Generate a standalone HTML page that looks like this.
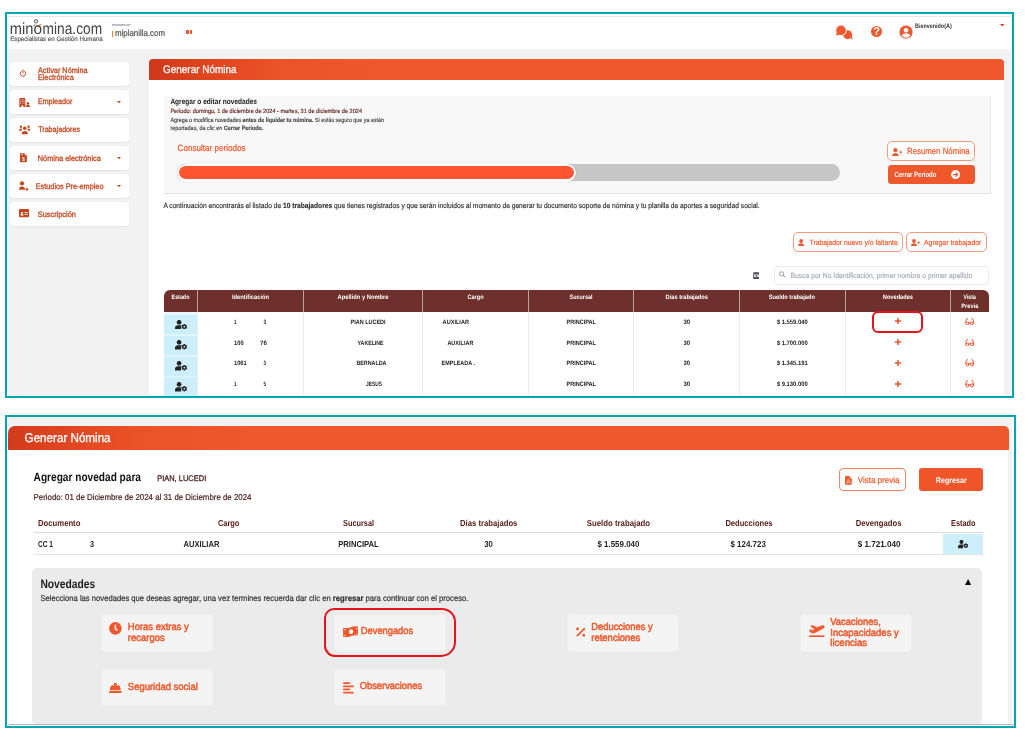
<!DOCTYPE html>
<html><head><meta charset="utf-8"><title>Generar Nomina</title>
<style>
html,body{margin:0;padding:0;background:#fff;}
body{width:1025px;height:736px;position:relative;overflow:hidden;font-family:"Liberation Sans",sans-serif;}
div,span.t,svg{position:absolute;box-sizing:border-box;}
#tx text{font-family:"Liberation Sans",sans-serif;white-space:pre;text-rendering:geometricPrecision;}
#w{left:0;top:0;width:1025px;height:736px;will-change:transform;}
</style></head><body><div id="w">
<div style="left:5px;top:12px;width:1009px;height:386px;background:#fff;border:2px solid #00a5b4;"></div>
<div style="left:8px;top:16px;width:1003px;height:1px;background:#e6e6f0;"></div>
<div style="left:8px;top:49px;width:1003px;height:346px;background:#f2f2f2;"></div>
<svg style="left:30px;top:14px;" width="16" height="16" viewBox="0 0 16 16"><circle cx="6.100" cy="7.300" r="1.700" fill="#fff" stroke="#444" stroke-width="0.900"/><path d="M3.200 12.600 L5.300 10.200" stroke="#444" stroke-width="0.800" fill="none"/><path d="M7.100 11.500 L8.300 12.900 L11 9.900" stroke="#f58220" stroke-width="1.100" fill="none"/></svg>
<div style="left:112px;top:30.6px;width:0.6px;height:6.6px;background:#f58220;"></div>
<div style="left:186.3px;top:29.6px;width:2.3px;height:4.8px;background:#f0582c;"></div>
<div style="left:189.6px;top:29.6px;width:2.4px;height:4.8px;background:#f0582c;"></div>
<svg style="left:835px;top:24.5px;" width="18.4" height="15.4" viewBox="0 0 18.4 15.4"><g fill="#ef582c"><circle cx="12.600" cy="9.700" r="4.500"/><path d="M14.800 12.600L17.700 14.700 16.800 11.200z"/></g><circle cx="6" cy="5.400" r="5.600" fill="#fff"/><g fill="#ef582c"><circle cx="6" cy="5.400" r="4.800"/><path d="M2 7.300L.9 10.400 4.600 9.700z"/></g></svg>
<svg style="left:869.6px;top:25.1px;" width="13" height="13" viewBox="0 0 13 13"><circle cx="6.500" cy="6.500" r="5.500" fill="#ef582c"/><text x="6.500" y="10.400" font-size="11" font-weight="700" text-anchor="middle" fill="#fff" font-family="Liberation Sans">?</text></svg>
<svg style="left:898.5px;top:24.9px;" width="14" height="14" viewBox="0 0 14 14"><circle cx="7" cy="7" r="6.600" fill="#ef582c"/><circle cx="7" cy="5.200" r="2.300" fill="#fff"/><path d="M2.900 10.700c.7-1.600 2.300-2.400 4.100-2.400s3.400.8 4.100 2.400c-1 1.200-2.500 1.900-4.100 1.900s-3.100-.7-4.100-1.900z" fill="#fff"/></svg>
<svg style="left:1000px;top:24.2px;" width="4.6" height="2.6" viewBox="0 0 4.6 2.6"><path d="M0 0h4.600L2.300 2.600z" fill="#ef3b24"/></svg>
<div style="left:9.6px;top:62px;width:119.4px;height:24.4px;background:#fff;border-radius:3.5px;box-shadow:0 0.5px 1.5px rgba(0,0,0,.06);"></div>
<div style="left:9.6px;top:90px;width:119.4px;height:24.4px;background:#fff;border-radius:3.5px;box-shadow:0 0.5px 1.5px rgba(0,0,0,.06);"></div>
<div style="left:9.6px;top:118px;width:119.4px;height:24.4px;background:#fff;border-radius:3.5px;box-shadow:0 0.5px 1.5px rgba(0,0,0,.06);"></div>
<div style="left:9.6px;top:146px;width:119.4px;height:24.4px;background:#fff;border-radius:3.5px;box-shadow:0 0.5px 1.5px rgba(0,0,0,.06);"></div>
<div style="left:9.6px;top:174px;width:119.4px;height:24.4px;background:#fff;border-radius:3.5px;box-shadow:0 0.5px 1.5px rgba(0,0,0,.06);"></div>
<div style="left:9.6px;top:202px;width:119.4px;height:24.4px;background:#fff;border-radius:3.5px;box-shadow:0 0.5px 1.5px rgba(0,0,0,.06);"></div>
<svg style="left:116.6px;top:101px;" width="4" height="2.2" viewBox="0 0 4 2.2"><path d="M0 0h4L2 2.200z" fill="#c4471f"/></svg>
<svg style="left:116.6px;top:157.4px;" width="4" height="2.2" viewBox="0 0 4 2.2"><path d="M0 0h4L2 2.200z" fill="#c4471f"/></svg>
<svg style="left:116.6px;top:185.4px;" width="4" height="2.2" viewBox="0 0 4 2.2"><path d="M0 0h4L2 2.200z" fill="#c4471f"/></svg>
<svg style="left:19.4px;top:69.4px;" width="8" height="8" viewBox="0 0 8 8"><path d="M2.350 2.300A2.750 2.750 0 1 0 5.650 2.300" fill="none" stroke="#c4471f" stroke-width="0.950" stroke-linecap="round"/><path d="M4 0.900V4" stroke="#c4471f" stroke-width="0.950" stroke-linecap="round"/></svg>
<svg style="left:18.7px;top:97.6px;" width="11.5" height="9.4" viewBox="0 0 11.5 9.4"><path d="M0.300 0.800q0-.7.700-.7h4.600q.7 0 .7.700V9.200H4.300V7.400H2.400V9.200H0.300z" fill="#c4471f"/><g fill="#fff"><rect x="1.300" y="1.600" width=".9" height=".8"/><rect x="2.900" y="1.600" width=".9" height=".8"/><rect x="4.500" y="1.600" width=".9" height=".8"/><rect x="1.300" y="3.400" width=".9" height=".8"/><rect x="2.900" y="3.400" width=".9" height=".8"/><rect x="4.500" y="3.400" width=".9" height=".8"/><rect x="1.300" y="5.200" width=".9" height=".8"/><rect x="4.500" y="5.200" width=".9" height=".8"/></g><circle cx="8.900" cy="5.400" r="1.300" fill="#c4471f"/><path d="M6.700 9.200c0-1.500.9-2.200 2.200-2.200s2.200.7 2.200 2.200z" fill="#c4471f"/></svg>
<svg style="left:18.7px;top:125.4px;" width="11.5" height="9.4" viewBox="0 0 11.5 9.4"><g fill="#c4471f"><circle cx="5.750" cy="3.300" r="1.800"/><path d="M2.600 9.200c0-2.300 1.300-3.300 3.150-3.300s3.150 1 3.150 3.300z"/><circle cx="1.900" cy="1.700" r="1.200"/><circle cx="9.600" cy="1.700" r="1.200"/><path d="M0 5.800c0-1.500.8-2.300 1.900-2.300.6 0 1.100.2 1.400.6-.5.600-.8 1-.9 1.700z"/><path d="M11.500 5.800c0-1.500-.8-2.300-1.900-2.300-.6 0-1.100.2-1.400.6.500.600.800 1 .9 1.700z"/></g></svg>
<svg style="left:20px;top:153px;" width="6.9" height="9.6" viewBox="0 0 7.6 10"><path d="M0.800 0h4.200l2.600 2.600V9.200q0 .8-.8.800H0.800Q0 10 0 9.200V.8Q0 0 .8 0z" fill="#c4471f"/><path d="M5 0v2.600h2.600z" fill="#fff" opacity=".55"/><rect x="1.300" y="1.300" width="2" height=".8" fill="#fff"/><text x="3.800" y="8.300" font-size="5" font-weight="700" fill="#fff" text-anchor="middle" font-family="Liberation Sans">$</text></svg>
<svg style="left:18.6px;top:181px;" width="10" height="10" viewBox="0 0 10 10"><g fill="#c4471f"><circle cx="3" cy="2.400" r="2.100"/><path d="M0 8.800c0-2.300 1.200-3.300 3-3.300s3 1 3 3.300z"/><rect x="6.200" y="7.800" width="3.400" height="1"/><rect x="7.400" y="6.600" width="1" height="3.400"/></g></svg>
<svg style="left:19px;top:209.4px;" width="10" height="8.2" viewBox="0 0 10 8.2"><rect x="0" y="0" width="10" height="8.200" rx=".9" fill="#c4471f"/><rect x="1" y="1.800" width="8" height="5.400" fill="#fff" opacity=".0"/><g fill="#fff"><circle cx="3" cy="3.900" r="1"/><path d="M1.300 6.600c0-1.100.7-1.600 1.700-1.600s1.700.5 1.700 1.600z"/><rect x="5.600" y="3.200" width="3.100" height=".8"/><rect x="5.600" y="4.900" width="3.100" height=".8"/></g></svg>
<div style="left:148.5px;top:59px;width:855.5px;height:21px;background:linear-gradient(90deg,#cf381a 0%,#df4620 7%,#ea5227 15%,#ef582c 27%,#ef582c 100%);border-radius:4px 4px 0 0;"></div>
<div style="left:148.5px;top:80px;width:855.5px;height:315px;background:#fff;"></div>
<div style="left:164px;top:95.6px;width:826.6px;height:98.2px;background:#f8f8f8;border-right:1px solid #e9e9e9;border-bottom:1px solid #e3e3e3;"></div>
<div style="left:177px;top:164.4px;width:663px;height:16.6px;background:#c6c6c6;border-radius:8.5px;"></div>
<div style="left:177px;top:164.2px;width:398.6px;height:17.4px;background:#fff;border-radius:9px;box-shadow:0 0 1px rgba(0,0,0,.35);"></div>
<div style="left:179.2px;top:166.4px;width:394.8px;height:12.8px;background:#ff5530;border-radius:6.5px;"></div>
<div style="left:887px;top:141px;width:88px;height:20px;background:#fff;border:1px solid #f29a7c;border-radius:5px;"></div>
<svg style="left:892px;top:147.6px;" width="10.4" height="8.6" viewBox="0 0 10.4 8.6"><g fill="#ef582c"><circle cx="3.400" cy="2.200" r="2.100"/><path d="M0 8.400c0-2.300 1.300-3.400 3.400-3.400s3.400 1.100 3.400 3.400z"/><rect x="7.400" y="3.700" width="3" height=".9"/><rect x="8.450" y="2.650" width=".9" height="3"/></g></svg>
<div style="left:888.4px;top:164.6px;width:86.6px;height:19.8px;background:#ee582c;border-radius:3.5px;"></div>
<svg style="left:951px;top:170.4px;" width="9.2" height="9.2" viewBox="0 0 9.2 9.2"><circle cx="4.600" cy="4.600" r="4.500" fill="#fff"/><path d="M2.200 4.600h4.200M4.700 2.600l2 2-2 2" stroke="#ee582c" stroke-width="1.200" fill="none"/></svg>
<div style="left:792.8px;top:232.2px;width:109.9px;height:20.3px;background:#fff;border:1px solid #f29a7c;border-radius:5px;"></div>
<svg style="left:798.4px;top:238.6px;" width="6.2" height="7.4" viewBox="0 0 6.2 7.4"><g fill="#ef582c"><circle cx="3.100" cy="2" r="1.900"/><path d="M0 7.400c0-2.200 1.200-3.200 3.100-3.200s3.100 1 3.100 3.200z"/></g></svg>
<div style="left:905.5px;top:232.2px;width:81.5px;height:20.3px;background:#fff;border:1px solid #f29a7c;border-radius:5px;"></div>
<svg style="left:910.5px;top:238.6px;" width="9" height="7.4" viewBox="0 0 9 7.4"><g fill="#ef582c"><circle cx="3" cy="2" r="1.900"/><path d="M0 7.400c0-2.200 1.200-3.200 3-3.200s3 1 3 3.200z"/><rect x="6.400" y="3.200" width="2.600" height=".8"/><rect x="7.300" y="2.300" width=".8" height="2.600"/></g></svg>
<div style="left:774px;top:266.4px;width:215.4px;height:18.2px;background:#fff;border:1px solid #ebebeb;border-radius:3.5px;"></div>
<svg style="left:779px;top:270.8px;" width="6.6" height="6.8" viewBox="0 0 6.6 6.8"><circle cx="2.600" cy="2.900" r="2.100" fill="none" stroke="#8a8a8a" stroke-width=".85"/><path d="M4.200 4.500l2.200 2.100" stroke="#8a8a8a" stroke-width="1"/></svg>
<svg style="left:752.7px;top:271.7px;" width="6.8" height="7.4" viewBox="0 0 6.8 7.4"><rect x=".2" y=".2" width="6.400" height="7" rx="1" fill="#4a4a5c"/><rect x=".9" y="2.300" width="5" height="2.800" fill="#dcdce6"/><rect x="2.600" y="3.100" width="1.600" height="1.200" fill="#4a4a5c"/></svg>
<div style="left:164px;top:290px;width:825px;height:22px;background:#6d302d;border-radius:6px 6px 0 0;"></div>
<div style="left:197px;top:290px;width:0.8px;height:22px;background:rgba(255,255,255,.55);"></div>
<div style="left:197px;top:312px;width:0.8px;height:84px;background:#ebebeb;"></div>
<div style="left:302.6px;top:290px;width:0.8px;height:22px;background:rgba(255,255,255,.55);"></div>
<div style="left:302.6px;top:312px;width:0.8px;height:84px;background:#ebebeb;"></div>
<div style="left:422.2px;top:290px;width:0.8px;height:22px;background:rgba(255,255,255,.55);"></div>
<div style="left:422.2px;top:312px;width:0.8px;height:84px;background:#ebebeb;"></div>
<div style="left:528px;top:290px;width:0.8px;height:22px;background:rgba(255,255,255,.55);"></div>
<div style="left:528px;top:312px;width:0.8px;height:84px;background:#ebebeb;"></div>
<div style="left:633.2px;top:290px;width:0.8px;height:22px;background:rgba(255,255,255,.55);"></div>
<div style="left:633.2px;top:312px;width:0.8px;height:84px;background:#ebebeb;"></div>
<div style="left:739px;top:290px;width:0.8px;height:22px;background:rgba(255,255,255,.55);"></div>
<div style="left:739px;top:312px;width:0.8px;height:84px;background:#ebebeb;"></div>
<div style="left:845px;top:290px;width:0.8px;height:22px;background:rgba(255,255,255,.55);"></div>
<div style="left:845px;top:312px;width:0.8px;height:84px;background:#ebebeb;"></div>
<div style="left:950.1px;top:290px;width:0.8px;height:22px;background:rgba(255,255,255,.55);"></div>
<div style="left:950.1px;top:312px;width:0.8px;height:84px;background:#ebebeb;"></div>
<div style="left:164px;top:312px;width:33.2px;height:3px;background:#eaf8fe;"></div>
<div style="left:164px;top:315px;width:33.2px;height:19.3px;background:#cdeffc;"></div>
<svg style="left:175px;top:319.6px;" width="12.4" height="9.8" viewBox="0 0 12.4 9.8"><g fill="#222"><circle cx="4.100" cy="2.300" r="2.350"/><path d="M0 9.600V8.100c0-1.800 1.300-2.800 3-2.800h2.200c.6 0 1.200.1 1.600.4-.6.600-.9 1.400-.9 2.200 0 .6.100 1.200.4 1.700z"/><path fill-rule="evenodd" d="M8.56 4.58 L8.64 3.88 L9.96 3.88 L10.04 4.58 L10.77 5.00 L11.41 4.71 L12.08 5.86 L11.51 6.28 L11.51 7.12 L12.08 7.54 L11.41 8.69 L10.77 8.40 L10.04 8.82 L9.96 9.52 L8.64 9.52 L8.56 8.82 L7.83 8.40 L7.19 8.69 L6.52 7.54 L7.09 7.12 L7.09 6.28 L6.52 5.86 L7.19 4.71 L7.83 5.00z M8.45 6.70a0.85 0.85 0 1 0 1.7 0a0.85 0.85 0 1 0 -1.7 0z"/></g></svg>
<svg style="left:893.5px;top:317.4px;" width="8" height="8" viewBox="0 0 8 8"><path d="M0.900 4H7.100M4 0.900V7.100" stroke="#f0502a" stroke-width="1.500" fill="none"/></svg>
<svg style="left:965px;top:317.8px;" width="9.4" height="7.4" viewBox="0 0 9.4 7.4"><g fill="none" stroke="#f4502c" stroke-width=".95" stroke-linecap="round"><circle cx="2.400" cy="5.400" r="1.500"/><circle cx="6.900" cy="5.400" r="1.500"/><path d="M3.800 4.700Q4.650 4 5.500 4.700M.85 5L1 2.300Q1.200 .6 2.600 .55M8.450 5L8.300 2.300Q8.100 .6 6.700 .55"/></g></svg>
<div style="left:164px;top:334.3px;width:33.2px;height:1.5px;background:#e1f5fd;"></div>
<div style="left:164px;top:335.8px;width:33.2px;height:19.3px;background:#cdeffc;"></div>
<svg style="left:175px;top:340.4px;" width="12.4" height="9.8" viewBox="0 0 12.4 9.8"><g fill="#222"><circle cx="4.100" cy="2.300" r="2.350"/><path d="M0 9.600V8.100c0-1.800 1.300-2.800 3-2.800h2.200c.6 0 1.200.1 1.600.4-.6.600-.9 1.400-.9 2.200 0 .6.100 1.200.4 1.700z"/><path fill-rule="evenodd" d="M8.56 4.58 L8.64 3.88 L9.96 3.88 L10.04 4.58 L10.77 5.00 L11.41 4.71 L12.08 5.86 L11.51 6.28 L11.51 7.12 L12.08 7.54 L11.41 8.69 L10.77 8.40 L10.04 8.82 L9.96 9.52 L8.64 9.52 L8.56 8.82 L7.83 8.40 L7.19 8.69 L6.52 7.54 L7.09 7.12 L7.09 6.28 L6.52 5.86 L7.19 4.71 L7.83 5.00z M8.45 6.70a0.85 0.85 0 1 0 1.7 0a0.85 0.85 0 1 0 -1.7 0z"/></g></svg>
<svg style="left:893.5px;top:338.2px;" width="8" height="8" viewBox="0 0 8 8"><path d="M0.900 4H7.100M4 0.900V7.100" stroke="#f0502a" stroke-width="1.500" fill="none"/></svg>
<svg style="left:965px;top:338.6px;" width="9.4" height="7.4" viewBox="0 0 9.4 7.4"><g fill="none" stroke="#f4502c" stroke-width=".95" stroke-linecap="round"><circle cx="2.400" cy="5.400" r="1.500"/><circle cx="6.900" cy="5.400" r="1.500"/><path d="M3.800 4.700Q4.650 4 5.500 4.700M.85 5L1 2.300Q1.200 .6 2.600 .55M8.450 5L8.300 2.300Q8.100 .6 6.700 .55"/></g></svg>
<div style="left:164px;top:355.1px;width:33.2px;height:1.5px;background:#e1f5fd;"></div>
<div style="left:164px;top:356.6px;width:33.2px;height:19.3px;background:#cdeffc;"></div>
<svg style="left:175px;top:361.2px;" width="12.4" height="9.8" viewBox="0 0 12.4 9.8"><g fill="#222"><circle cx="4.100" cy="2.300" r="2.350"/><path d="M0 9.600V8.100c0-1.800 1.300-2.800 3-2.800h2.200c.6 0 1.200.1 1.600.4-.6.600-.9 1.400-.9 2.200 0 .6.100 1.200.4 1.700z"/><path fill-rule="evenodd" d="M8.56 4.58 L8.64 3.88 L9.96 3.88 L10.04 4.58 L10.77 5.00 L11.41 4.71 L12.08 5.86 L11.51 6.28 L11.51 7.12 L12.08 7.54 L11.41 8.69 L10.77 8.40 L10.04 8.82 L9.96 9.52 L8.64 9.52 L8.56 8.82 L7.83 8.40 L7.19 8.69 L6.52 7.54 L7.09 7.12 L7.09 6.28 L6.52 5.86 L7.19 4.71 L7.83 5.00z M8.45 6.70a0.85 0.85 0 1 0 1.7 0a0.85 0.85 0 1 0 -1.7 0z"/></g></svg>
<svg style="left:893.5px;top:359px;" width="8" height="8" viewBox="0 0 8 8"><path d="M0.900 4H7.100M4 0.900V7.100" stroke="#f0502a" stroke-width="1.500" fill="none"/></svg>
<svg style="left:965px;top:359.4px;" width="9.4" height="7.4" viewBox="0 0 9.4 7.4"><g fill="none" stroke="#f4502c" stroke-width=".95" stroke-linecap="round"><circle cx="2.400" cy="5.400" r="1.500"/><circle cx="6.900" cy="5.400" r="1.500"/><path d="M3.800 4.700Q4.650 4 5.500 4.700M.85 5L1 2.300Q1.200 .6 2.600 .55M8.450 5L8.300 2.300Q8.100 .6 6.700 .55"/></g></svg>
<div style="left:164px;top:375.9px;width:33.2px;height:1.5px;background:#e1f5fd;"></div>
<div style="left:164px;top:377.4px;width:33.2px;height:18.6px;background:#cdeffc;"></div>
<svg style="left:175px;top:382px;" width="12.4" height="9.8" viewBox="0 0 12.4 9.8"><g fill="#222"><circle cx="4.100" cy="2.300" r="2.350"/><path d="M0 9.600V8.100c0-1.800 1.300-2.800 3-2.800h2.200c.6 0 1.200.1 1.600.4-.6.600-.9 1.400-.9 2.200 0 .6.100 1.200.4 1.700z"/><path fill-rule="evenodd" d="M8.56 4.58 L8.64 3.88 L9.96 3.88 L10.04 4.58 L10.77 5.00 L11.41 4.71 L12.08 5.86 L11.51 6.28 L11.51 7.12 L12.08 7.54 L11.41 8.69 L10.77 8.40 L10.04 8.82 L9.96 9.52 L8.64 9.52 L8.56 8.82 L7.83 8.40 L7.19 8.69 L6.52 7.54 L7.09 7.12 L7.09 6.28 L6.52 5.86 L7.19 4.71 L7.83 5.00z M8.45 6.70a0.85 0.85 0 1 0 1.7 0a0.85 0.85 0 1 0 -1.7 0z"/></g></svg>
<svg style="left:893.5px;top:379.8px;" width="8" height="8" viewBox="0 0 8 8"><path d="M0.900 4H7.100M4 0.900V7.100" stroke="#f0502a" stroke-width="1.500" fill="none"/></svg>
<svg style="left:965px;top:380.2px;" width="9.4" height="7.4" viewBox="0 0 9.4 7.4"><g fill="none" stroke="#f4502c" stroke-width=".95" stroke-linecap="round"><circle cx="2.400" cy="5.400" r="1.500"/><circle cx="6.900" cy="5.400" r="1.500"/><path d="M3.800 4.700Q4.650 4 5.500 4.700M.85 5L1 2.300Q1.200 .6 2.600 .55M8.450 5L8.300 2.300Q8.100 .6 6.700 .55"/></g></svg>
<div style="left:871.7px;top:311px;width:51.3px;height:21.8px;background:transparent;border:2px solid #e6131f;border-radius:6px;"></div>
<div style="left:5px;top:415px;width:1011px;height:313px;background:#fff;border:2px solid #00a5b4;"></div>
<div style="left:8px;top:418px;width:1004px;height:307px;background:#f2f2f2;"></div>
<div style="left:8px;top:426px;width:1001px;height:24px;background:linear-gradient(90deg,#d23b1b 0%,#e04620 6%,#ea5227 13%,#ef582c 24%,#ef582c 100%);border-radius:7px 5px 0 0;"></div>
<div style="left:8px;top:450px;width:1000px;height:274px;background:#fff;"></div>
<div style="left:9px;top:724px;width:1005px;height:1px;background:#a9b5c9;"></div>
<div style="left:838.9px;top:467.8px;width:67.1px;height:23.2px;background:#fff;border:1px solid #f0845f;border-radius:4px;"></div>
<svg style="left:845px;top:475.9px;" width="6.8" height="8.8" viewBox="0 0 6.8 8.8"><path d="M.7 0h3.700l2.400 2.400V8.100q0 .7-.7.700H.7Q0 8.800 0 8.100V.7Q0 0 .7 0z" fill="#ef582c"/><path d="M4.400 0v2.400h2.400z" fill="#fff" opacity=".5"/><path d="M1.500 7.200c.9-1 1.600-2.600 1.700-3.900.3 1.400 1.100 2.500 2.300 3-1.400 0-2.800.3-4 .9z" fill="none" stroke="#fff" stroke-width=".55"/></svg>
<div style="left:919px;top:467.8px;width:64px;height:23.2px;background:#ee562a;border-radius:3px;"></div>
<div style="left:33.6px;top:532px;width:949.4px;height:1px;background:#d9d9d9;"></div>
<div style="left:943.2px;top:534px;width:39.8px;height:19.6px;background:#cdeffc;"></div>
<svg style="left:957.7px;top:540.2px;" width="10.54" height="8.33" viewBox="0 0 12.4 9.8"><g fill="#222"><circle cx="4.100" cy="2.300" r="2.350"/><path d="M0 9.600V8.100c0-1.800 1.300-2.800 3-2.800h2.200c.6 0 1.200.1 1.600.4-.6.600-.9 1.400-.9 2.200 0 .6.100 1.200.4 1.700z"/><path fill-rule="evenodd" d="M8.56 4.58 L8.64 3.88 L9.96 3.88 L10.04 4.58 L10.77 5.00 L11.41 4.71 L12.08 5.86 L11.51 6.28 L11.51 7.12 L12.08 7.54 L11.41 8.69 L10.77 8.40 L10.04 8.82 L9.96 9.52 L8.64 9.52 L8.56 8.82 L7.83 8.40 L7.19 8.69 L6.52 7.54 L7.09 7.12 L7.09 6.28 L6.52 5.86 L7.19 4.71 L7.83 5.00z M8.45 6.70a0.85 0.85 0 1 0 1.7 0a0.85 0.85 0 1 0 -1.7 0z"/></g></svg>
<div style="left:33.6px;top:553.8px;width:949.4px;height:1px;background:#e6e6e6;"></div>
<div style="left:32px;top:568.4px;width:950px;height:155.6px;background:#ebebeb;border-radius:5px 5px 4px 4px;"></div>
<svg style="left:965px;top:579px;" width="6.2" height="6" viewBox="0 0 6.2 6"><path d="M3.100 0L6.200 6H0z" fill="#111"/></svg>
<div style="left:101px;top:614px;width:112px;height:37.5px;background:#f4f4f4;border:1px solid #efefef;border-radius:3.5px;"></div>
<div style="left:334px;top:614px;width:112px;height:37.5px;background:#f4f4f4;border:1px solid #efefef;border-radius:3.5px;"></div>
<div style="left:567px;top:614px;width:112px;height:37.5px;background:#f4f4f4;border:1px solid #efefef;border-radius:3.5px;"></div>
<div style="left:800px;top:614px;width:112.4px;height:37.5px;background:#f4f4f4;border:1px solid #efefef;border-radius:3.5px;"></div>
<div style="left:101px;top:669.4px;width:112px;height:37.1px;background:#f4f4f4;border:1px solid #efefef;border-radius:3.5px;"></div>
<div style="left:334px;top:669.4px;width:112px;height:37.1px;background:#f4f4f4;border:1px solid #efefef;border-radius:3.5px;"></div>
<svg style="left:109.2px;top:622px;" width="12.8" height="12.8" viewBox="0 0 12.8 12.8"><circle cx="6.400" cy="6.400" r="6.300" fill="#ef582c"/><path d="M6.400 2.800V6.800L8.600 8.300" stroke="#fff" stroke-width="1.500" fill="none"/></svg>
<svg style="left:342.6px;top:626px;" width="15.8" height="11.6" viewBox="0 0 15.8 11.6"><path d="M.1 1.700Q4 2.600 7.800 1.200T15.500 .6V9.700Q11.600 8.800 7.800 10.200T.1 10.800z" fill="#ef582c"/><ellipse cx="8.100" cy="5.800" rx="2.050" ry="2.450" fill="#fff"/><circle cx="2" cy="3.500" r=".65" fill="#fff"/><circle cx="2" cy="9.300" r=".65" fill="#fff"/><circle cx="13.900" cy="2.500" r=".65" fill="#fff"/><circle cx="13.900" cy="8.300" r=".65" fill="#fff"/></svg>
<svg style="left:575.6px;top:627px;" width="9.8" height="10.6" viewBox="0 0 9.8 10.6"><path d="M0.900 9.100L8.900 1.200" stroke="#ef582c" stroke-width="1.800"/><circle cx="1.600" cy="2" r="1.450" fill="#ef582c"/><circle cx="7.900" cy="8.300" r="1.450" fill="#ef582c"/></svg>
<svg style="left:809px;top:624.6px;" width="15.6" height="12.6" viewBox="0 0 15.6 12.6"><path d="M2.100 .6L3.600 .4 8 2.600 12.800 .7Q14.900 .2 15.300 1.400 15.500 2.600 13.800 3.600L6.700 7.400Q4.500 8.400 2.900 8.200L.2 5.700 1.300 4.600 4 5.500 5.900 4.400 2.100 1.600z" fill="#ef582c" stroke="#ef582c" stroke-width=".5" stroke-linejoin="round"/><rect x="0" y="10.400" width="15.400" height="1.900" fill="#ef582c"/></svg>
<svg style="left:109.4px;top:682.8px;" width="12.8" height="10.2" viewBox="0 0 12.8 10.2"><path d="M.9 7.200C.9 4.400 1.900 2.600 3.600 1.700L4.400 3 4.900 3V.1H7.700V3L8.200 3 9 1.700C10.700 2.600 11.700 4.400 11.700 7.200z" fill="#ef582c"/><rect x="0" y="8.100" width="12.700" height="1.900" rx=".5" fill="#ef582c"/></svg>
<svg style="left:342.6px;top:682px;" width="11.4" height="11.8" viewBox="0 0 11.4 11.8"><path d="M.8 1.100H6.400M.8 4.400H10.100M.8 7.400H6.400M.8 10.600H10.100" stroke="#ef582c" stroke-width="1.650" stroke-linecap="round" fill="none"/></svg>
<div style="left:324.4px;top:607.6px;width:131.6px;height:49.4px;background:transparent;border:2.1px solid #e6131f;border-radius:10px 14px 15px 11px;"></div>
<svg id="tx" style="left:0;top:0" width="1025" height="736" viewBox="0 0 1025 736" xml:space="preserve"><text x="9.8" y="34" font-size="16.1" fill="#444" textLength="23.60" lengthAdjust="spacingAndGlyphs">min</text>
<text x="33.6" y="34" font-size="16.1" fill="#444" textLength="8.60" lengthAdjust="spacingAndGlyphs">o</text>
<text x="42.6" y="34" font-size="16.1" fill="#444" textLength="59.50" lengthAdjust="spacingAndGlyphs">mina.com</text>
<text x="10.2" y="41" font-size="6.4" fill="#555" textLength="92.50" lengthAdjust="spacingAndGlyphs" stroke="#555" stroke-width="0.15">Especialistas en Gestión Humana</text>
<text x="112" y="26" font-size="3" fill="#777" textLength="19.00" lengthAdjust="spacingAndGlyphs" stroke="#777" stroke-width="0.07">POWERED BY</text>
<text x="115" y="36" font-size="8.9" fill="#555" textLength="50.00" lengthAdjust="spacingAndGlyphs" stroke="#555" stroke-width="0.21">miplanilla.com</text>
<text x="915" y="28" font-size="6.4" fill="#333" textLength="36.70" lengthAdjust="spacingAndGlyphs"><tspan font-weight="700">Bienvenido(A)</tspan></text>
<text x="37.95" y="73" font-size="8" fill="#c4471f" textLength="49.70" lengthAdjust="spacingAndGlyphs" stroke="#c4471f" stroke-width="0.3">Activar Nómina</text>
<text x="37.95" y="80" font-size="8" fill="#c4471f" textLength="35.80" lengthAdjust="spacingAndGlyphs" stroke="#c4471f" stroke-width="0.3">Electrónica</text>
<text x="37.95" y="104" font-size="8" fill="#c4471f" textLength="34.30" lengthAdjust="spacingAndGlyphs" stroke="#c4471f" stroke-width="0.3">Empleador</text>
<text x="38.15" y="132" font-size="8" fill="#c4471f" textLength="41.90" lengthAdjust="spacingAndGlyphs" stroke="#c4471f" stroke-width="0.3">Trabajadores</text>
<text x="37.75" y="161" font-size="8" fill="#c4471f" textLength="63.10" lengthAdjust="spacingAndGlyphs" stroke="#c4471f" stroke-width="0.3">Nómina electrónica</text>
<text x="35.75" y="189" font-size="8" fill="#c4471f" textLength="67.70" lengthAdjust="spacingAndGlyphs" stroke="#c4471f" stroke-width="0.3">Estudios Pre-empleo</text>
<text x="37.75" y="217" font-size="8" fill="#c4471f" textLength="38.10" lengthAdjust="spacingAndGlyphs" stroke="#c4471f" stroke-width="0.3">Suscripción</text>
<text x="163" y="73" font-size="11" fill="#fff" textLength="73.60" lengthAdjust="spacingAndGlyphs" stroke="#fff" stroke-width="0.26">Generar Nómina</text>
<text x="170.4" y="104" font-size="7.8" fill="#1c1c1c" textLength="86.60" lengthAdjust="spacingAndGlyphs"><tspan font-weight="700">Agregar o editar novedades</tspan></text>
<text x="170.4" y="113" font-size="6.1" fill="#5c1d18" textLength="191.60" lengthAdjust="spacingAndGlyphs" stroke="#5c1d18" stroke-width="0.15">Periodo: domingo, 1 de diciembre de 2024 - martes, 31 de diciembre de 2024</text>
<text x="170.4" y="122" font-size="6.1" fill="#444" textLength="213.60" lengthAdjust="spacingAndGlyphs" stroke="#444" stroke-width="0.15">Agrega o modifica novedades <tspan font-weight="700">antes de liquidar tu nómina.</tspan> Si estás seguro que ya están</text>
<text x="170.4" y="130" font-size="6.1" fill="#444" textLength="93.00" lengthAdjust="spacingAndGlyphs" stroke="#444" stroke-width="0.15">reportadas, da clic en <tspan font-weight="700">Cerrar Periodo.</tspan></text>
<text x="177.6" y="151" font-size="9.2" fill="#ef582c" textLength="68.00" lengthAdjust="spacingAndGlyphs" stroke="#ef582c" stroke-width="0.22">Consultar periodos</text>
<text x="907" y="154" font-size="9" fill="#ef582c" textLength="62.60" lengthAdjust="spacingAndGlyphs" stroke="#ef582c" stroke-width="0.22">Resumen Nómina</text>
<text x="894.4" y="177" font-size="7.5" fill="#fff" textLength="42.00" lengthAdjust="spacingAndGlyphs"><tspan font-weight="700">Cerrar Periodo</tspan></text>
<text x="163.4" y="208" font-size="7.5" fill="#333" textLength="596.30" lengthAdjust="spacingAndGlyphs" stroke="#333" stroke-width="0.18">A continuación encontrarás el listado de <tspan font-weight="700">10 trabajadores</tspan> que tienes registrados y que serán incluidos al momento de generar tu documento soporte de nómina y tu planilla de aportes a seguridad social.</text>
<text x="809.5" y="245" font-size="7.6" fill="#ef582c" textLength="88.20" lengthAdjust="spacingAndGlyphs" stroke="#ef582c" stroke-width="0.18">Trabajador nuevo y/o faltante</text>
<text x="924" y="245" font-size="7.6" fill="#ef582c" textLength="57.40" lengthAdjust="spacingAndGlyphs" stroke="#ef582c" stroke-width="0.18">Agregar trabajador</text>
<text x="790.6" y="278" font-size="7.5" fill="#a9adb8" textLength="181.60" lengthAdjust="spacingAndGlyphs" stroke="#a9adb8" stroke-width="0.18">Busca por No Identificación, primer nombre o primer apellido</text>
<text x="171.6" y="299" font-size="6.3" fill="#fff" textLength="17.80" lengthAdjust="spacingAndGlyphs"><tspan font-weight="700">Estado</tspan></text>
<text x="232" y="299" font-size="6.3" fill="#fff" textLength="37.00" lengthAdjust="spacingAndGlyphs"><tspan font-weight="700">Identificación</tspan></text>
<text x="337.5" y="299" font-size="6.3" fill="#fff" textLength="51.10" lengthAdjust="spacingAndGlyphs"><tspan font-weight="700">Apellido y Nombre</tspan></text>
<text x="467.4" y="299" font-size="6.3" fill="#fff" textLength="16.20" lengthAdjust="spacingAndGlyphs"><tspan font-weight="700">Cargo</tspan></text>
<text x="569.6" y="299" font-size="6.3" fill="#fff" textLength="22.80" lengthAdjust="spacingAndGlyphs"><tspan font-weight="700">Sucursal</tspan></text>
<text x="665.6" y="299" font-size="6.3" fill="#fff" textLength="42.40" lengthAdjust="spacingAndGlyphs"><tspan font-weight="700">Días trabajados</tspan></text>
<text x="768.7" y="299" font-size="6.3" fill="#fff" textLength="46.30" lengthAdjust="spacingAndGlyphs"><tspan font-weight="700">Sueldo trabajado</tspan></text>
<text x="882.8" y="299" font-size="6.3" fill="#fff" textLength="30.20" lengthAdjust="spacingAndGlyphs"><tspan font-weight="700">Novedades</tspan></text>
<text x="963.6" y="299" font-size="6.3" fill="#fff" textLength="12.20" lengthAdjust="spacingAndGlyphs"><tspan font-weight="700">Vista</tspan></text>
<text x="961.3" y="308" font-size="6.3" fill="#fff" textLength="17.10" lengthAdjust="spacingAndGlyphs"><tspan font-weight="700">Previa</tspan></text>
<text x="234" y="324" font-size="6.3" fill="#222" textLength="2.50" lengthAdjust="spacingAndGlyphs"><tspan font-weight="700">1</tspan></text>
<text x="263.4" y="324" font-size="6.3" fill="#222" textLength="2.60" lengthAdjust="spacingAndGlyphs"><tspan font-weight="700">3</tspan></text>
<text x="350.6" y="324" font-size="6.3" fill="#222" textLength="35.00" lengthAdjust="spacingAndGlyphs"><tspan font-weight="700">PIAN LUCEDI</tspan></text>
<text x="442.6" y="324" font-size="6.3" fill="#222" textLength="26.40" lengthAdjust="spacingAndGlyphs"><tspan font-weight="700">AUXILIAR</tspan></text>
<text x="566.6" y="324" font-size="6.3" fill="#222" textLength="29.40" lengthAdjust="spacingAndGlyphs"><tspan font-weight="700">PRINCIPAL</tspan></text>
<text x="683.4" y="324" font-size="6.3" fill="#222" textLength="6.60" lengthAdjust="spacingAndGlyphs"><tspan font-weight="700">30</tspan></text>
<text x="776.9" y="324" font-size="6.3" fill="#222" textLength="30.80" lengthAdjust="spacingAndGlyphs"><tspan font-weight="700">$ 1.559.040</tspan></text>
<text x="234" y="345" font-size="6.3" fill="#222" textLength="9.60" lengthAdjust="spacingAndGlyphs"><tspan font-weight="700">100</tspan></text>
<text x="260" y="345" font-size="6.3" fill="#222" textLength="6.80" lengthAdjust="spacingAndGlyphs"><tspan font-weight="700">76</tspan></text>
<text x="357.6" y="345" font-size="6.3" fill="#222" textLength="26.00" lengthAdjust="spacingAndGlyphs"><tspan font-weight="700">YAKELINE</tspan></text>
<text x="447.4" y="345" font-size="6.3" fill="#222" textLength="26.00" lengthAdjust="spacingAndGlyphs"><tspan font-weight="700">AUXILIAR</tspan></text>
<text x="566.6" y="345" font-size="6.3" fill="#222" textLength="29.40" lengthAdjust="spacingAndGlyphs"><tspan font-weight="700">PRINCIPAL</tspan></text>
<text x="683.4" y="345" font-size="6.3" fill="#222" textLength="6.60" lengthAdjust="spacingAndGlyphs"><tspan font-weight="700">30</tspan></text>
<text x="776.9" y="345" font-size="6.3" fill="#222" textLength="30.80" lengthAdjust="spacingAndGlyphs"><tspan font-weight="700">$ 1.700.000</tspan></text>
<text x="234" y="365" font-size="6.3" fill="#222" textLength="12.60" lengthAdjust="spacingAndGlyphs"><tspan font-weight="700">1061</tspan></text>
<text x="263.6" y="365" font-size="6.3" fill="#222" textLength="2.40" lengthAdjust="spacingAndGlyphs"><tspan font-weight="700">3</tspan></text>
<text x="356.4" y="365" font-size="6.3" fill="#222" textLength="30.00" lengthAdjust="spacingAndGlyphs"><tspan font-weight="700">BERNALDA</tspan></text>
<text x="441.6" y="365" font-size="6.3" fill="#222" textLength="33.40" lengthAdjust="spacingAndGlyphs"><tspan font-weight="700">EMPLEADA .</tspan></text>
<text x="566.6" y="365" font-size="6.3" fill="#222" textLength="29.40" lengthAdjust="spacingAndGlyphs"><tspan font-weight="700">PRINCIPAL</tspan></text>
<text x="683.4" y="365" font-size="6.3" fill="#222" textLength="6.60" lengthAdjust="spacingAndGlyphs"><tspan font-weight="700">30</tspan></text>
<text x="776.9" y="365" font-size="6.3" fill="#222" textLength="30.80" lengthAdjust="spacingAndGlyphs"><tspan font-weight="700">$ 1.345.191</tspan></text>
<text x="234" y="386" font-size="6.3" fill="#222" textLength="2.50" lengthAdjust="spacingAndGlyphs"><tspan font-weight="700">1</tspan></text>
<text x="263.4" y="386" font-size="6.3" fill="#222" textLength="2.60" lengthAdjust="spacingAndGlyphs"><tspan font-weight="700">5</tspan></text>
<text x="366" y="386" font-size="6.3" fill="#222" textLength="16.00" lengthAdjust="spacingAndGlyphs"><tspan font-weight="700">JESUS</tspan></text>
<text x="566.6" y="386" font-size="6.3" fill="#222" textLength="29.40" lengthAdjust="spacingAndGlyphs"><tspan font-weight="700">PRINCIPAL</tspan></text>
<text x="683.4" y="386" font-size="6.3" fill="#222" textLength="6.60" lengthAdjust="spacingAndGlyphs"><tspan font-weight="700">30</tspan></text>
<text x="776.9" y="386" font-size="6.3" fill="#222" textLength="30.80" lengthAdjust="spacingAndGlyphs"><tspan font-weight="700">$ 9.130.000</tspan></text>
<text x="24.6" y="442" font-size="12.8" fill="#fff" textLength="86.00" lengthAdjust="spacingAndGlyphs" stroke="#fff" stroke-width="0.31">Generar Nómina</text>
<text x="33.6" y="481" font-size="12" fill="#111" textLength="107.40" lengthAdjust="spacingAndGlyphs"><tspan font-weight="700">Agregar novedad para</tspan></text>
<text x="157.15" y="481" font-size="8.2" fill="#4f2220" textLength="49.10" lengthAdjust="spacingAndGlyphs" stroke="#4f2220" stroke-width="0.3">PIAN, LUCEDI</text>
<text x="33.6" y="500" font-size="8.5" fill="#4f2220" textLength="217.80" lengthAdjust="spacingAndGlyphs" stroke="#4f2220" stroke-width="0.20">Periodo: 01 de Diciembre de 2024 al 31 de Diciembre de 2024</text>
<text x="857.7" y="483" font-size="8.7" fill="#ef582c" textLength="41.80" lengthAdjust="spacingAndGlyphs" stroke="#ef582c" stroke-width="0.21">Vista previa</text>
<text x="935.8" y="483" font-size="8.2" fill="#fff" textLength="31.00" lengthAdjust="spacingAndGlyphs"><tspan font-weight="700">Regresar</tspan></text>
<text x="38" y="526" font-size="8.7" fill="#541b18" textLength="42.40" lengthAdjust="spacingAndGlyphs"><tspan font-weight="700">Documento</tspan></text>
<text x="218" y="526" font-size="8.7" fill="#541b18" textLength="21.40" lengthAdjust="spacingAndGlyphs"><tspan font-weight="700">Cargo</tspan></text>
<text x="343" y="526" font-size="8.7" fill="#541b18" textLength="31.00" lengthAdjust="spacingAndGlyphs"><tspan font-weight="700">Sucursal</tspan></text>
<text x="460" y="526" font-size="8.7" fill="#541b18" textLength="57.40" lengthAdjust="spacingAndGlyphs"><tspan font-weight="700">Días trabajados</tspan></text>
<text x="586.8" y="526" font-size="8.7" fill="#541b18" textLength="63.20" lengthAdjust="spacingAndGlyphs"><tspan font-weight="700">Sueldo trabajado</tspan></text>
<text x="725.4" y="526" font-size="8.7" fill="#541b18" textLength="47.20" lengthAdjust="spacingAndGlyphs"><tspan font-weight="700">Deducciones</tspan></text>
<text x="855.7" y="526" font-size="8.7" fill="#541b18" textLength="45.80" lengthAdjust="spacingAndGlyphs"><tspan font-weight="700">Devengados</tspan></text>
<text x="951" y="526" font-size="8.7" fill="#541b18" textLength="24.50" lengthAdjust="spacingAndGlyphs"><tspan font-weight="700">Estado</tspan></text>
<text x="38" y="547" font-size="8.7" fill="#222" textLength="15.00" lengthAdjust="spacingAndGlyphs"><tspan font-weight="700">CC 1</tspan></text>
<text x="90" y="547" font-size="8.7" fill="#222" textLength="4.00" lengthAdjust="spacingAndGlyphs"><tspan font-weight="700">3</tspan></text>
<text x="183.6" y="547" font-size="8.7" fill="#222" textLength="35.80" lengthAdjust="spacingAndGlyphs"><tspan font-weight="700">AUXILIAR</tspan></text>
<text x="338.2" y="547" font-size="8.7" fill="#222" textLength="40.60" lengthAdjust="spacingAndGlyphs"><tspan font-weight="700">PRINCIPAL</tspan></text>
<text x="484.2" y="547" font-size="8.7" fill="#222" textLength="8.60" lengthAdjust="spacingAndGlyphs"><tspan font-weight="700">30</tspan></text>
<text x="597.4" y="547" font-size="8.7" fill="#222" textLength="42.10" lengthAdjust="spacingAndGlyphs"><tspan font-weight="700">$ 1.559.040</tspan></text>
<text x="730.5" y="547" font-size="8.7" fill="#222" textLength="35.30" lengthAdjust="spacingAndGlyphs"><tspan font-weight="700">$ 124.723</tspan></text>
<text x="857.7" y="547" font-size="8.7" fill="#222" textLength="42.80" lengthAdjust="spacingAndGlyphs"><tspan font-weight="700">$ 1.721.040</tspan></text>
<text x="40.4" y="588" font-size="12.2" fill="#1c1c1c" textLength="54.80" lengthAdjust="spacingAndGlyphs"><tspan font-weight="700">Novedades</tspan></text>
<text x="40.4" y="601" font-size="8.3" fill="#333" textLength="428.00" lengthAdjust="spacingAndGlyphs" stroke="#333" stroke-width="0.20">Selecciona las novedades que deseas agregar, una vez termines recuerda dar clic en <tspan font-weight="700">regresar</tspan> para continuar con el proceso.</text>
<text x="127.85" y="630" font-size="10.1" fill="#ef582c" textLength="60.90" lengthAdjust="spacingAndGlyphs" stroke="#ef582c" stroke-width="0.5">Horas extras y</text>
<text x="127.85" y="641" font-size="10.1" fill="#ef582c" textLength="36.90" lengthAdjust="spacingAndGlyphs" stroke="#ef582c" stroke-width="0.5">recargos</text>
<text x="360.85" y="634" font-size="10.1" fill="#ef582c" textLength="52.30" lengthAdjust="spacingAndGlyphs" stroke="#ef582c" stroke-width="0.5">Devengados</text>
<text x="591.25" y="630" font-size="10.1" fill="#ef582c" textLength="61.50" lengthAdjust="spacingAndGlyphs" stroke="#ef582c" stroke-width="0.5">Deducciones y</text>
<text x="591.25" y="641" font-size="10.1" fill="#ef582c" textLength="49.10" lengthAdjust="spacingAndGlyphs" stroke="#ef582c" stroke-width="0.5">retenciones</text>
<text x="830.25" y="625" font-size="10.1" fill="#ef582c" textLength="50.50" lengthAdjust="spacingAndGlyphs" stroke="#ef582c" stroke-width="0.5">Vacaciones,</text>
<text x="830.25" y="636" font-size="10.1" fill="#ef582c" textLength="68.50" lengthAdjust="spacingAndGlyphs" stroke="#ef582c" stroke-width="0.5">Incapacidades y</text>
<text x="830.25" y="646" font-size="10.1" fill="#ef582c" textLength="36.90" lengthAdjust="spacingAndGlyphs" stroke="#ef582c" stroke-width="0.5">licencias</text>
<text x="127.85" y="690" font-size="10.1" fill="#ef582c" textLength="69.90" lengthAdjust="spacingAndGlyphs" stroke="#ef582c" stroke-width="0.5">Seguridad social</text>
<text x="359.65" y="689" font-size="10.1" fill="#ef582c" textLength="62.50" lengthAdjust="spacingAndGlyphs" stroke="#ef582c" stroke-width="0.5">Observaciones</text></svg>
</div></body></html>
